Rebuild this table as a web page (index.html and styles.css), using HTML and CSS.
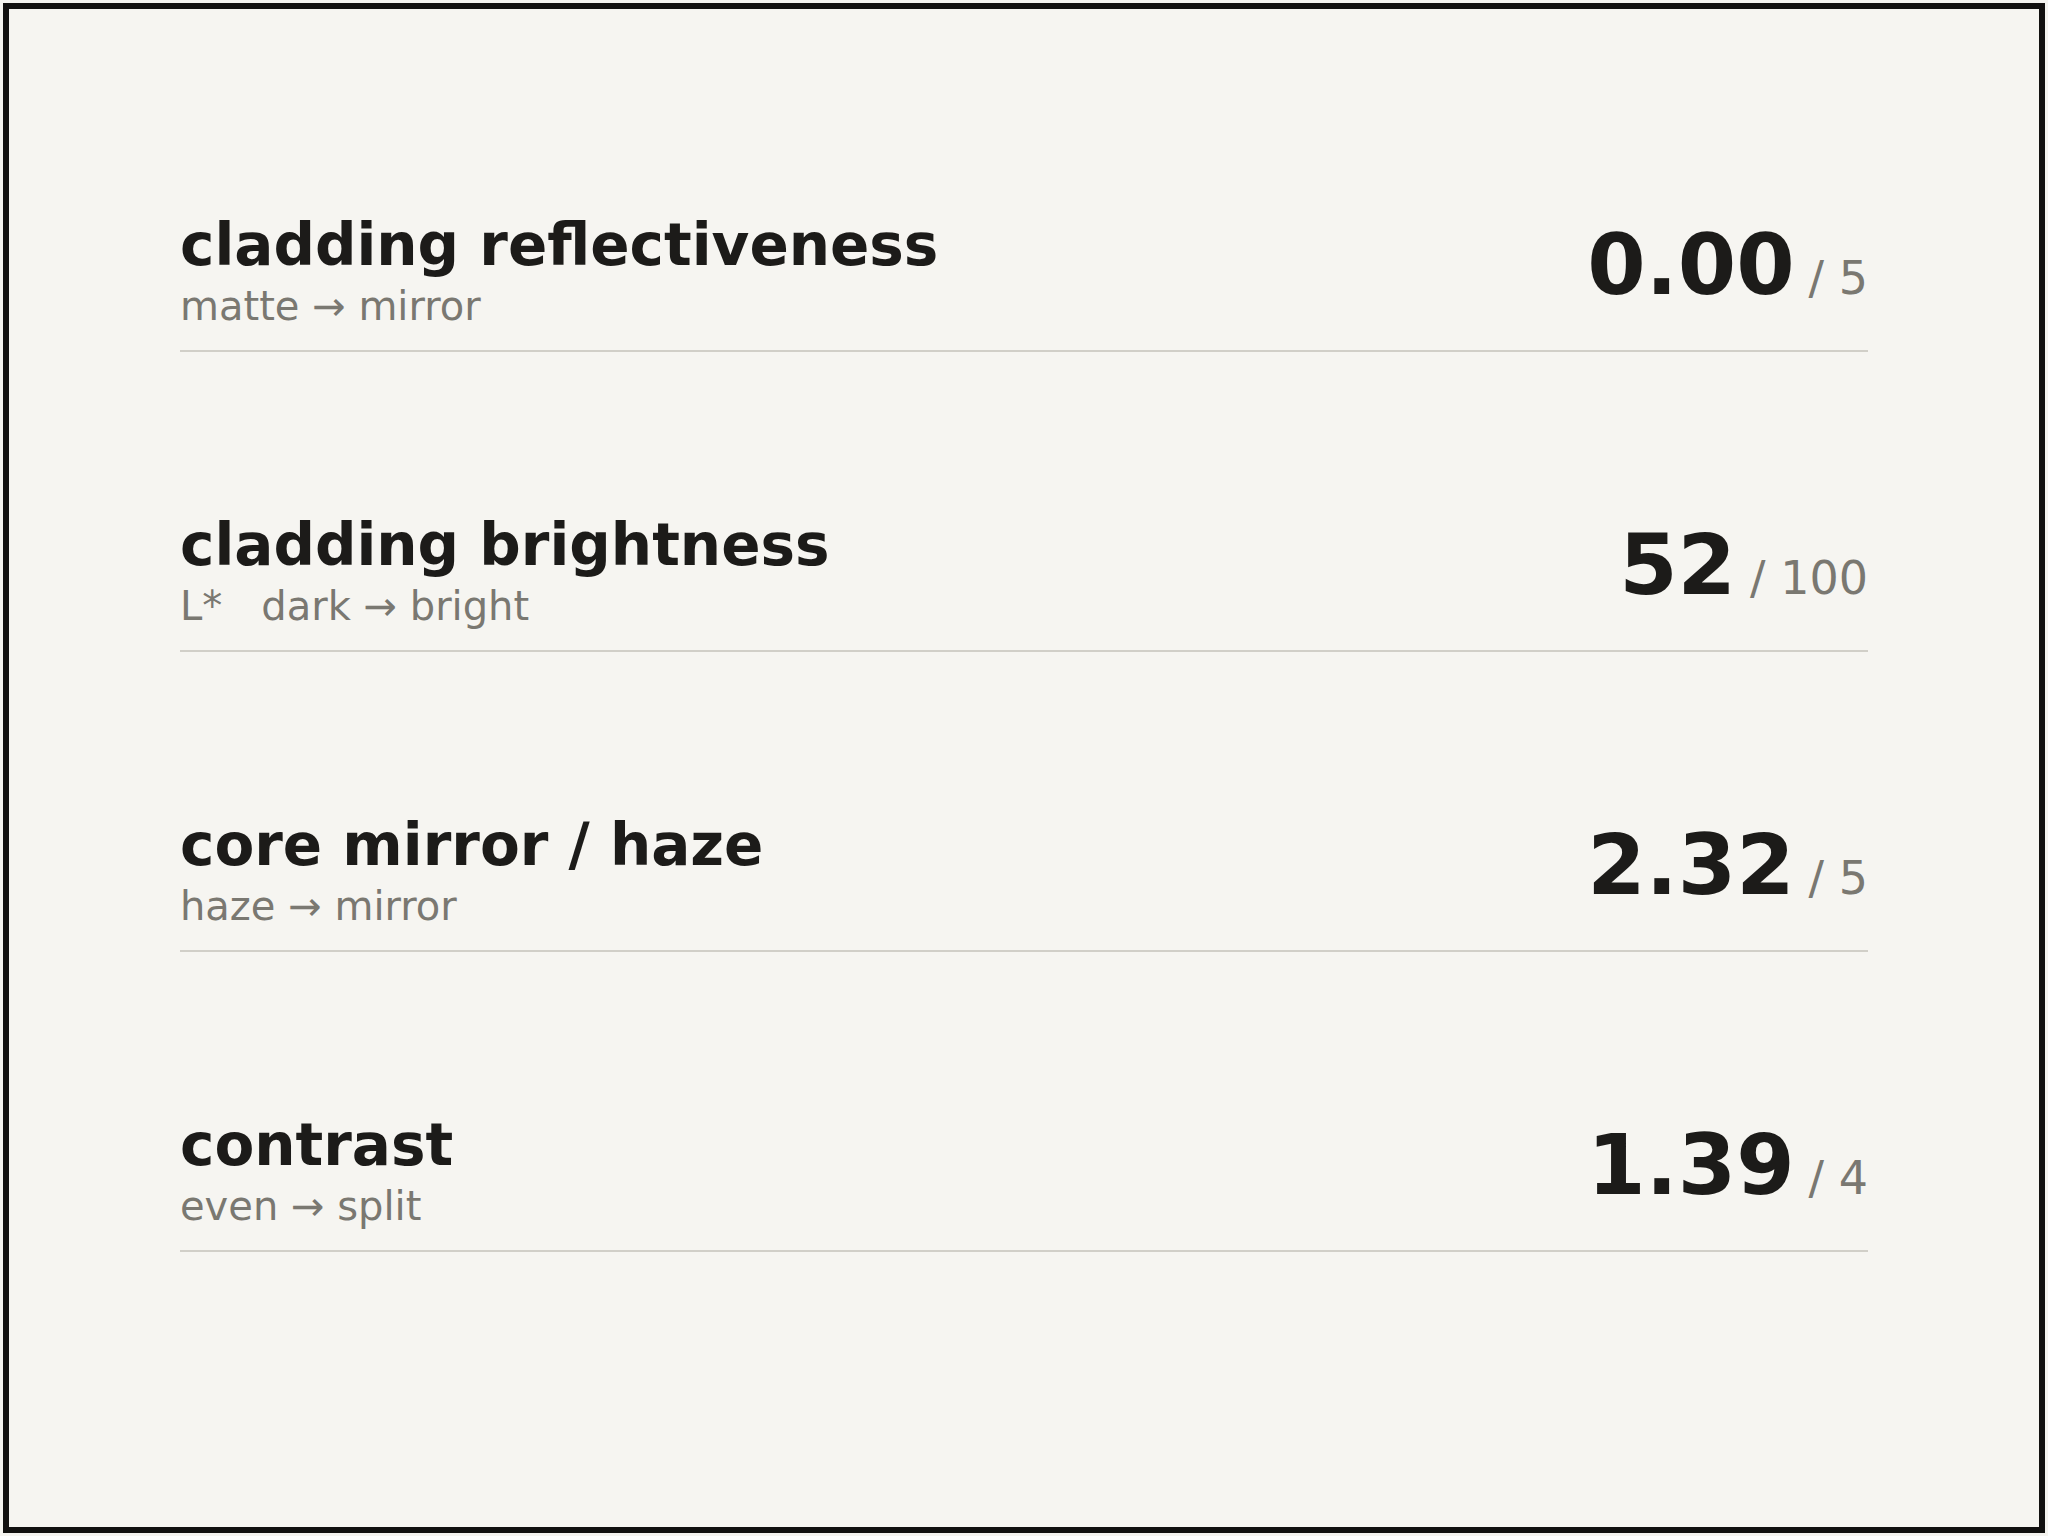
FILE: index.html
```html
<!DOCTYPE html>
<html lang="en">
<head>
    <meta charset="UTF-8">
    <meta name="viewport" content="width=device-width, initial-scale=1.0">
    <title>Cladding readout</title>
    <link rel="stylesheet" href="styles.css">
</head>
<body>
    <div class="frame">
        <div class="readout">
            <div class="row">
                <div class="label">
                    <p class="title">cladding reflectiveness</p>
                    <p class="range">matte → mirror</p>
                </div>
                <div class="value"><span class="num">0.00</span><span class="max">/ 5</span></div>
            </div>
            <div class="row">
                <div class="label">
                    <p class="title">cladding brightness</p>
                    <p class="range"><span class="unit">L*</span>dark → bright</p>
                </div>
                <div class="value"><span class="num">52</span><span class="max">/ 100</span></div>
            </div>
            <div class="row">
                <div class="label">
                    <p class="title">core mirror / haze</p>
                    <p class="range">haze → mirror</p>
                </div>
                <div class="value"><span class="num">2.32</span><span class="max">/ 5</span></div>
            </div>
            <div class="row">
                <div class="label">
                    <p class="title">contrast</p>
                    <p class="range">even → split</p>
                </div>
                <div class="value"><span class="num">1.39</span><span class="max">/ 4</span></div>
            </div>
        </div>
    </div>
</body>
</html>
```

FILE: styles.css
```css
html, body {
    margin: 0;
    padding: 0;
}
body {
    background-color: #f5f4f0;
    font-family: "DejaVu Sans", "Liberation Sans", sans-serif;
}
.frame {
    box-sizing: border-box;
    margin: 3px;
    height: 1530px;
    border: 6px solid #121110;
    background-color: #f6f5f1;
    padding: 205px 171px 0 171px;
}
.readout {
    display: flex;
    flex-direction: column;
    gap: 162px;
}
.row {
    display: flex;
    justify-content: space-between;
    align-items: center;
    padding-bottom: 20px;
    border-bottom: 2px solid #d1cfc8;
}
.label p {
    margin: 0;
}
.title {
    font-size: 58px;
    font-weight: 700;
    line-height: 62px;
    color: #1c1b19;
}
.label .range {
    margin-top: 6px;
    font-size: 40px;
    line-height: 48px;
    color: #7a7871;
}
.unit {
    margin-right: 39px;
}
.value {
    display: flex;
    align-items: baseline;
    padding-bottom: 14px;
}
.num {
    font-size: 84px;
    font-weight: 700;
    line-height: 1;
    color: #1c1b19;
}
.max {
    font-size: 46px;
    margin-left: 14px;
    color: #7a7871;
}
```
